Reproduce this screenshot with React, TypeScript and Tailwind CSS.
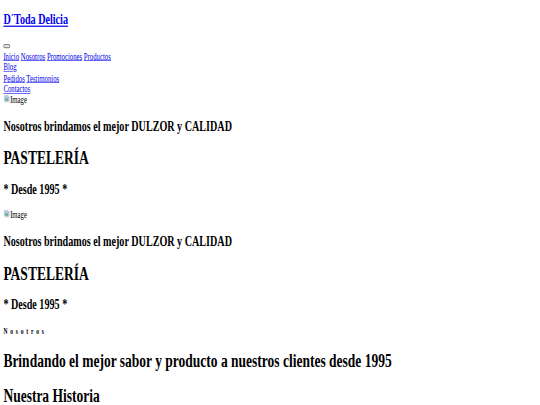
import React from "react"

const link = "text-[#0000ee] underline"

function BrokenImage() {
  // what the browser draws for an <img> whose file is missing: icon + alt text
  return (
    <span className="inline-flex items-start">
      <svg width="16" height="16" viewBox="0 0 16 16" className="shrink-0">
        <path d="M2.5 1.5H10.5L13.5 4.5V10.5L11 12.5L8.5 10.5L6 13L2.5 10.5Z" fill="#fff" stroke="#8c8c8c" />
        <path d="M3.5 3H10V5.5H12.5V9.5L3.5 9.5Z" fill="#8ec4ee" />
        <path d="M3.5 9.5L6 6.5L8 8.5L9.5 7L12.5 9.5Z" fill="#3e9a3e" />
        <path d="M10.5 1.5V4.5H13.5" fill="#e6e6e6" stroke="#8c8c8c" />
      </svg>
      <span>Image</span>
    </span>
  )
}

function Slide() {
  return (
    <div>
      <div className="mt-[19.92px] h-[18.4px]">
        <BrokenImage />
      </div>
      <h2 className="mt-[19.92px] text-[24px] leading-[27.6px] font-bold">
        Nosotros brindamos el mejor DULZOR y CALIDAD
      </h2>
      <h1 className="mt-[21.44px] text-[32px] leading-[36.8px] font-bold">PASTELERÍA</h1>
      <h2 className="mt-[21.44px] text-[24px] leading-[27.6px] font-bold">* Desde 1995 *</h2>
    </div>
  )
}

export default function App() {
  return (
    <div className="w-[540px] h-[405px] overflow-hidden bg-white">
      <div className="w-[1280px] origin-top-left scale-x-[0.4219] scale-y-[0.596] px-2 pt-[19.92px] pb-8 font-['Liberation_Serif',serif] text-[16px] leading-[18.4px] text-black">
        <header>
          <h1 className="text-[24px] leading-[27.6px] font-bold">
            <a href="#" className={link}>D´Toda Delicia</a>
          </h1>
          <nav className="mt-[19.92px]">
            <div className="h-[18.4px]">
              <span className="inline-block w-[16px] h-[7px] rounded-[3px] border-2 border-[#8a8a8a] bg-[#efefef] align-baseline" />
            </div>
            <div>
              <a href="#" className={link}>Inicio</a>{" "}
              <a href="#" className={link}>Nosotros</a>{" "}
              <a href="#" className={link}>Promociones</a>{" "}
              <a href="#" className={link}>Productos</a>
            </div>
            <div>
              <a href="#" className={link}>Blog</a>
            </div>
            <div>
              <a href="#" className={link}>Pedidos</a>{" "}
              <a href="#" className={link}>Testimonios</a>
            </div>
            <div>
              <a href="#" className={link}>Contactos</a>
            </div>
            <div className="h-[18.4px]">
              <BrokenImage />
            </div>
          </nav>
        </header>

        {/* carousel slides, both shown since nothing hides them */}
        <div>
          <h2 className="mt-[19.92px] text-[24px] leading-[27.6px] font-bold">
            Nosotros brindamos el mejor DULZOR y CALIDAD
          </h2>
          <h1 className="mt-[21.44px] text-[32px] leading-[36.8px] font-bold">PASTELERÍA</h1>
          <h2 className="mt-[21.44px] text-[24px] leading-[27.6px] font-bold">* Desde 1995 *</h2>
        </div>
        <Slide />

        <section>
          <h6 className="mt-[22.2px] text-[13.3px] leading-[15.3px] font-bold tracking-[6.6px]">Nosotros</h6>
          <h1 className="mt-[23.5px] text-[32px] leading-[36.8px] font-bold">
            Brindando el mejor sabor y producto a nuestros clientes desde 1995
          </h1>
          <h1 className="mt-[21.44px] text-[32px] leading-[36.8px] font-bold">Nuestra Historia</h1>
        </section>
      </div>
    </div>
  )
}
